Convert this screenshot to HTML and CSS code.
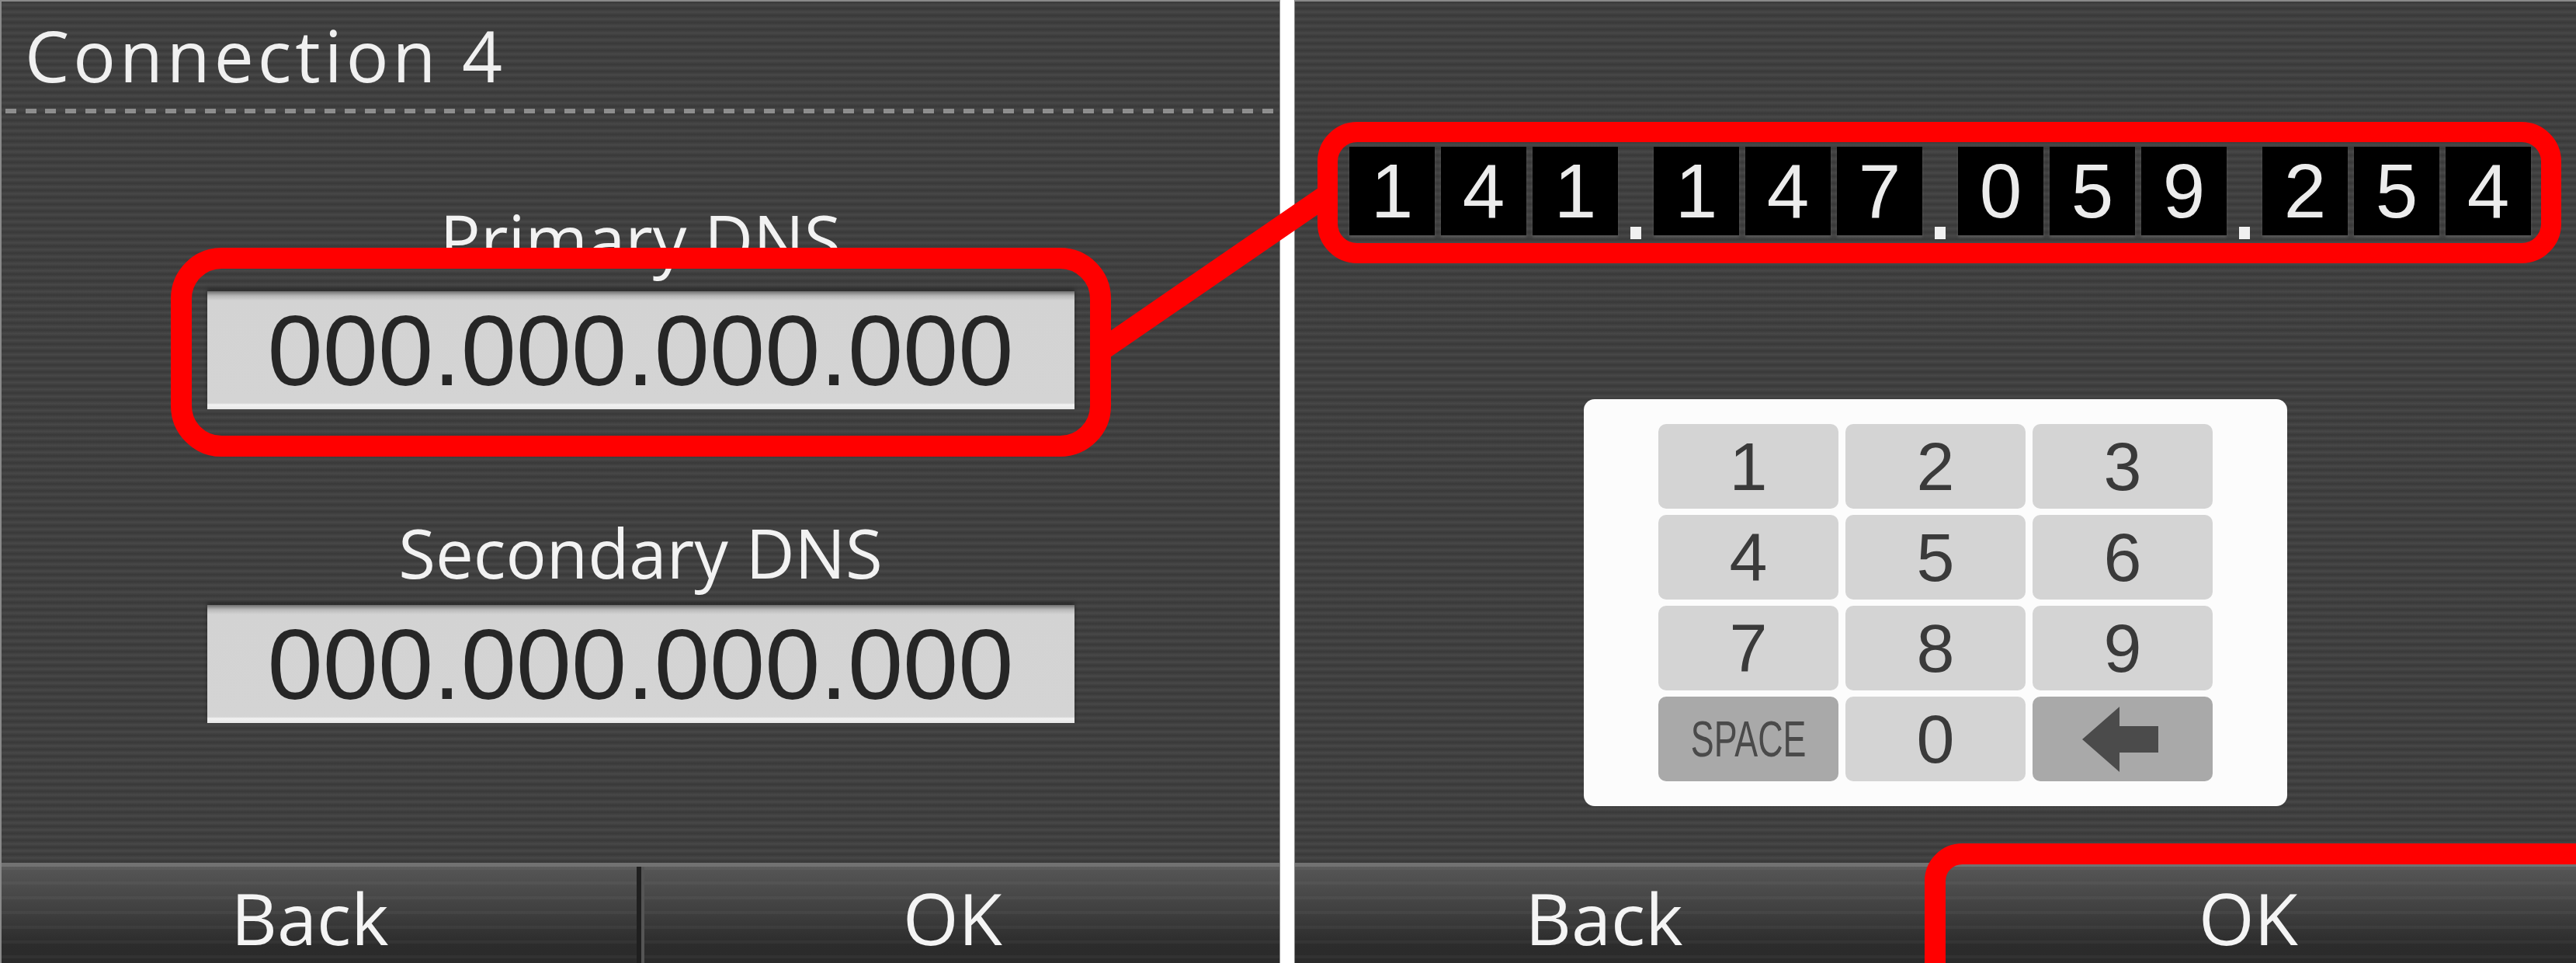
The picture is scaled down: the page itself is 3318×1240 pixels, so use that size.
FILE: index.html
```html
<!DOCTYPE html>
<html lang="en">
<head>
<meta charset="utf-8">
<title>Connection 4 - DNS</title>
<link rel="stylesheet" href="styles.css">
</head>
<body>
<div class="screens">
  <section class="panel panel-left">
    <header class="title">Connection 4</header>
    <div class="dots"></div>
    <div class="form">
      <div class="label">Primary DNS</div>
      <div class="field">000.000.000.000</div>
      <div class="label label-second">Secondary DNS</div>
      <div class="field">000.000.000.000</div>
    </div>
    <footer class="bar">
      <div class="btn">Back</div>
      <div class="bar-sep"></div>
      <div class="btn">OK</div>
    </footer>
  </section>

  <div class="divider"></div>

  <section class="panel panel-right">
    <div class="ip-row">
      <div class="octet"><span class="cell">1</span><span class="cell">4</span><span class="cell">1</span></div>
      <span class="ip-dot"></span>
      <div class="octet"><span class="cell">1</span><span class="cell">4</span><span class="cell">7</span></div>
      <span class="ip-dot"></span>
      <div class="octet"><span class="cell">0</span><span class="cell">5</span><span class="cell">9</span></div>
      <span class="ip-dot"></span>
      <div class="octet"><span class="cell">2</span><span class="cell">5</span><span class="cell">4</span></div>
    </div>

    <div class="keypad">
      <div class="key">1</div>
      <div class="key">2</div>
      <div class="key">3</div>
      <div class="key">4</div>
      <div class="key">5</div>
      <div class="key">6</div>
      <div class="key">7</div>
      <div class="key">8</div>
      <div class="key">9</div>
      <div class="key key-dark"><span class="space-label">SPACE</span></div>
      <div class="key">0</div>
      <div class="key key-dark">
        <svg class="bksp" width="98" height="84" viewBox="0 0 98 84" aria-hidden="true">
          <polygon points="0,42 48,0 48,25 98,25 98,59 48,59 48,84" fill="#4b4b4b"/>
        </svg>
      </div>
    </div>

    <footer class="bar">
      <div class="btn">Back</div>
      <div class="bar-sep"></div>
      <div class="btn">OK</div>
    </footer>
  </section>
</div>

<svg class="annot" width="3318" height="1240" viewBox="0 0 3318 1240" aria-hidden="true">
  <rect x="233.5" y="332.5" width="1184" height="242" rx="52" ry="52" fill="none" stroke="#ff0000" stroke-width="27"/>
  <rect x="1710" y="170" width="1576" height="156" rx="38" ry="38" fill="none" stroke="#ff0000" stroke-width="26"/>
  <rect x="2492.5" y="1099.5" width="900" height="300" rx="35" ry="35" fill="none" stroke="#ff0000" stroke-width="27"/>
  <line x1="1417" y1="452" x2="1711" y2="250" stroke="#ff0000" stroke-width="28"/>
</svg>
</body>
</html>
```

FILE: styles.css
```css
html, body {
  margin: 0;
  padding: 0;
}

body {
  position: relative;
  width: 3318px;
  height: 1240px;
  overflow: hidden;
  background: #ffffff;
  font-family: "Open Sans", "DejaVu Sans", sans-serif;
}

.screens {
  display: flex;
  height: 1240px;
}

.panel {
  box-sizing: border-box;
  display: flex;
  flex-direction: column;
  height: 1240px;
  border-top: 2px solid #8a8a8a;
  background: repeating-linear-gradient(to bottom, #393939 0px, #474747 4.5px, #393939 9px);
}

.panel-left {
  width: 1649px;
  border-left: 2px solid #8a8a8a;
  border-right: 1px solid #8a8a8a;
}

.panel-right {
  width: 1651px;
  border-left: 1px solid #8a8a8a;
}

.divider {
  width: 18px;
  background: #ffffff;
}

/* ---------- left screen ---------- */

.title {
  padding: 24px 0 0 30px;
  font-size: 91px;
  line-height: 91px;
  letter-spacing: 5px;
  color: #f0f0f0;
}

.dots {
  height: 6px;
  margin: 23px 0 0 5px;
  background: repeating-linear-gradient(to right, #8e8e8e 0px, #8e8e8e 14px, transparent 14px, transparent 25.7px);
}

.form {
  display: flex;
  flex-direction: column;
  align-items: center;
  padding-top: 118px;
}

.label {
  font-size: 87px;
  line-height: 87px;
  color: #f2f2f2;
}

.label-second {
  margin-top: 141px;
}

.field {
  box-sizing: border-box;
  margin-top: 24px;
  width: 1117px;
  height: 152px;
  display: flex;
  align-items: center;
  justify-content: center;
  font-family: "Liberation Sans", Arial, sans-serif;
  font-size: 128px;
  color: #262626;
  background: linear-gradient(to bottom,
    #707070 0px, #b8b8b8 6px, #d3d3d3 12px,
    #d4d4d4 calc(100% - 8px), #f2f2f2 calc(100% - 6px), #e6e6e6 100%);
  box-shadow: 0 -3px 5px rgba(0, 0, 0, 0.35);
}

/* ---------- bottom bar ---------- */

.bar {
  box-sizing: border-box;
  margin-top: auto;
  height: 129px;
  display: flex;
  border-top: 5px solid #727272;
  background:
    repeating-linear-gradient(to bottom, rgba(255, 255, 255, 0.035) 0px, rgba(255, 255, 255, 0.035) 4px, transparent 4px, transparent 19px),
    linear-gradient(to bottom, #565656 0%, #404040 45%, #2c2c2c 80%, #2a2a2a 100%);
}

.btn {
  flex: 1;
  display: flex;
  align-items: center;
  justify-content: center;
  padding: 8px 24px 0 0;
  font-size: 92px;
  line-height: 1;
  color: #f4f4f4;
}

.bar-sep {
  width: 6px;
  background: #1f1f1f;
  border-right: 4px solid #555555;
}

/* ---------- right screen ---------- */

.ip-row {
  display: flex;
  align-self: flex-start;
  margin: 187px 0 0 70px;
}

.octet {
  display: flex;
  gap: 8px;
}

.cell {
  width: 110px;
  height: 114px;
  background: #000000;
  color: #ececec;
  font-family: "Liberation Sans", Arial, sans-serif;
  font-size: 98px;
  line-height: 114px;
  text-align: center;
  box-shadow: 0 3px 3px rgba(120, 120, 120, 0.35);
}

.ip-dot {
  width: 46px;
  display: flex;
  align-items: flex-end;
  justify-content: center;
}

.ip-dot::after {
  content: "";
  width: 14px;
  height: 16px;
  margin-bottom: -5px;
  background: #f0f0f0;
}

.keypad {
  box-sizing: border-box;
  align-self: center;
  margin-top: 211px;
  width: 906px;
  height: 524px;
  padding: 32px 96px;
  display: grid;
  grid-template-columns: repeat(3, 232px);
  grid-auto-rows: 109px;
  gap: 8px 9px;
  background: #fcfcfc;
  border-radius: 14px;
}

.key {
  display: flex;
  align-items: center;
  justify-content: center;
  background: #d4d4d4;
  border-radius: 10px;
  font-family: "Liberation Sans", Arial, sans-serif;
  font-size: 88px;
  color: #3a3a3a;
}

.key-dark {
  background: #a9a9a9;
}

.space-label {
  display: inline-block;
  font-size: 64px;
  color: #4a4a4a;
  transform: scaleX(0.7);
}

.bksp {
  display: block;
  margin-left: -6px;
}

/* ---------- annotation overlay ---------- */

.annot {
  position: absolute;
  left: 0;
  top: 0;
  pointer-events: none;
}
```
